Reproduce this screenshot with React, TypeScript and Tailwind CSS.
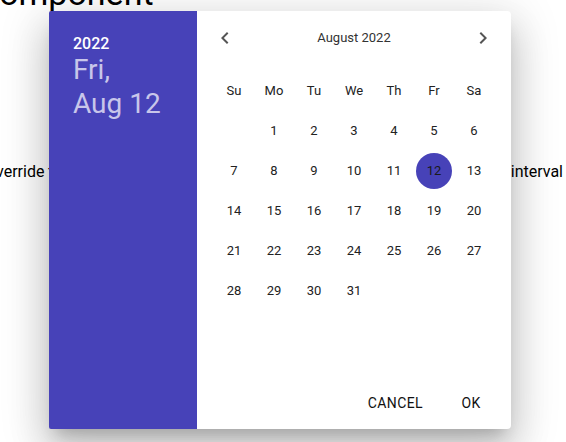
import React from 'react';

const weekDays = ['Su', 'Mo', 'Tu', 'We', 'Th', 'Fr', 'Sa'];

// August 2022 starts on a Monday
const buildWeeks = () => {
    const cells: (number | null)[] = [null];
    for (let d = 1; d <= 31; d++) cells.push(d);
    while (cells.length % 7 !== 0) cells.push(null);
    const weeks: (number | null)[][] = [];
    for (let i = 0; i < cells.length; i += 7) weeks.push(cells.slice(i, i + 7));
    return weeks;
};

const ArrowLeft = () => (
    <svg width="24" height="24" viewBox="0 0 24 24" fill="#555">
        <path d="M15.41 16.59L10.83 12l4.58-4.59L14 6l-6 6 6 6 1.41-1.41z" />
    </svg>
);

const ArrowRight = () => (
    <svg width="24" height="24" viewBox="0 0 24 24" fill="#555">
        <path d="M8.59 16.59L13.17 12 8.59 7.41 10 6l6 6-6 6-1.41-1.41z" />
    </svg>
);

const App = () => {
    const selected = 12;
    const weeks = buildWeeks();

    return (
        <div className="relative w-[566px] h-[442px] overflow-hidden bg-white text-black font-['Roboto','Liberation_Sans',sans-serif]">
            {/* page behind the dialog */}
            <h2 className="-mt-[27px] -ml-[23px] text-[34px] leading-[40px] font-normal whitespace-nowrap">
                Component
            </h2>
            <p className="mt-[147px] flex justify-between whitespace-nowrap text-[16px] leading-[24px]">
                <span className="-ml-[15px]">Override the time</span>
                <span className="mr-[3px]">interval</span>
            </p>

            {/* date picker dialog */}
            <div className="absolute left-[49px] top-[11px] w-[462px] h-[418px] flex rounded-[4px] bg-white shadow-[0_11px_15px_-7px_rgba(0,0,0,0.2),0_24px_38px_3px_rgba(0,0,0,0.14),0_9px_46px_8px_rgba(0,0,0,0.12)]">
                <div className="w-[148px] shrink-0 bg-[#4742b8] pl-[24px] pt-[23px] rounded-l-[2px]">
                    <div className="text-[16px] leading-[20px] font-medium text-white">2022</div>
                    <div className="-mt-[1px] text-[28px] leading-[34px] text-[#c8c6ea]">
                        <div>Fri,</div>
                        <div>Aug 12</div>
                    </div>
                </div>

                <div className="flex-1 flex flex-col">
                    <div className="mt-[7px] h-[40px] px-[16px] flex items-center justify-between">
                        <ArrowLeft />
                        <span className="text-[13px] text-[#333]">August 2022</span>
                        <ArrowRight />
                    </div>

                    <div className="mt-[12px] mx-auto w-[280px]">
                        <div className="grid grid-cols-7 h-[41px] items-center text-center text-[13px] text-[#222]">
                            {weekDays.map(d => (
                                <span key={d}>{d}</span>
                            ))}
                        </div>
                        {weeks.map((week, wi) => (
                            <div key={wi} className="grid grid-cols-7 h-[40px]">
                                {week.map((day, di) => (
                                    <div key={di} className="flex items-center justify-center">
                                        {day !== null && (
                                            <span
                                                className={
                                                    day === selected
                                                        ? 'w-[36px] h-[36px] rounded-full bg-[#4742b8] flex items-center justify-center text-[13px] text-[#1a1a1a]'
                                                        : 'w-[36px] h-[36px] flex items-center justify-center text-[13px] text-[#222]'
                                                }
                                            >
                                                {day}
                                            </span>
                                        )}
                                    </div>
                                ))}
                            </div>
                        ))}
                    </div>

                    <div className="mt-auto p-[8px] flex justify-end gap-[8px]">
                        <button className="h-[36px] min-w-[64px] px-[8px] text-[14px] font-normal tracking-[0.4px] uppercase text-[#111]">
                            Cancel
                        </button>
                        <button className="h-[36px] min-w-[64px] px-[8px] text-[14px] font-normal tracking-[0.4px] uppercase text-[#111]">
                            OK
                        </button>
                    </div>
                </div>
            </div>
        </div>
    );
};

export default App;
